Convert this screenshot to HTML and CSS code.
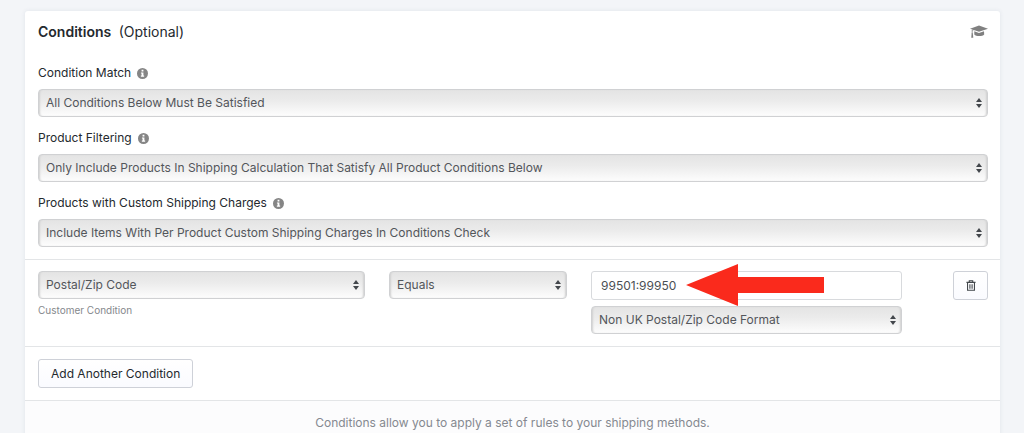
FILE: index.html
```html
<!DOCTYPE html>
<html lang="en">
<head>
<meta charset="utf-8">
<title>Conditions</title>
<link rel="stylesheet" href="styles.css">
</head>
<body>
<svg class="sprite" aria-hidden="true">
  <symbol id="info" viewBox="0 0 12 12">
    <circle cx="6" cy="6" r="6" fill="#858585"/>
    <path d="M5 2h2v1.700H5zM4.300 4.800H7v3.500h.8v1.200H4.200V8.300H5V6h-.7z" fill="#fff"/>
  </symbol>
</svg>
<main class="card">
  <section class="section general">
    <header class="card-header">
      <h2 class="title">Conditions <span class="optional">(Optional)</span></h2>
      <svg class="cap" viewBox="0 0 18 14" aria-hidden="true">
        <path d="M9 .6 18 3.800 9 6.800 0 3.800z" fill="#808080"/>
        <path d="M4.300 6.300 9 7.900l5-1.600.2 3.200c-1.600 2-8.300 2-9.900 0z" fill="#808080"/>
        <path d="M9 3.800 2.200 5v4.200" fill="none" stroke="#808080" stroke-width=".8"/>
        <path d="M1.700 8.300h1.100l.5 4.500H1.200z" fill="#808080"/>
      </svg>
    </header>
    <div class="field">
      <div class="label-row"><label for="match">Condition Match</label><svg class="info"><use href="#info"/></svg></div>
      <div class="select-box"><select id="match"><option>All Conditions Below Must Be Satisfied</option></select></div>
    </div>
    <div class="field">
      <div class="label-row"><label for="filtering">Product Filtering</label><svg class="info"><use href="#info"/></svg></div>
      <div class="select-box"><select id="filtering"><option>Only Include Products In Shipping Calculation That Satisfy All Product Conditions Below</option></select></div>
    </div>
    <div class="field">
      <div class="label-row"><label for="charges">Products with Custom Shipping Charges</label><svg class="info"><use href="#info"/></svg></div>
      <div class="select-box"><select id="charges"><option>Include Items With Per Product Custom Shipping Charges In Conditions Check</option></select></div>
    </div>
  </section>
  <section class="section condition">
    <div>
      <div class="select-box"><select id="type" aria-label="Condition type" aria-describedby="type-help"><option>Postal/Zip Code</option></select></div>
      <p class="help" id="type-help">Customer Condition</p>
    </div>
    <div class="select-box"><select aria-label="Operator"><option>Equals</option></select></div>
    <div class="values">
      <div class="input-box">
        <input class="text-input" type="text" value="99501:99950" aria-label="Postal/Zip Code value">
        <svg class="arrow" viewBox="0 0 138 42" aria-hidden="true"><path d="M0 21 52 0v13h86v16H52v13z" fill="#fa2a1c"/></svg>
      </div>
      <div class="select-box"><select aria-label="Code format"><option>Non UK Postal/Zip Code Format</option></select></div>
    </div>
    <button class="button delete" type="button" aria-label="Delete condition">
      <svg class="trash" viewBox="0 0 11 12" fill="none" stroke="#42474c" stroke-width="1.200" aria-hidden="true">
        <path d="M.5 2.600h10M3.600 2.400V.8h3.800v1.600M1.700 3v8.200h7.600V3M4.300 4.700v4.800M6.700 4.700v4.800"/>
      </svg>
    </button>
  </section>
  <section class="section">
    <button class="button" type="button">Add Another Condition</button>
  </section>
  <footer class="card-footer">Conditions allow you to apply a set of rules to your shipping methods.</footer>
</main>
</body>
</html>
```
FILE: styles.css
```css
* {
  box-sizing: border-box;
}

body {
  margin: 0;
  padding: 11px 24px 0 25px;
  background: #f3f5f8;
  color: #24292e;
  font: 12px/16px Inter, "Liberation Sans", sans-serif;
  overflow: hidden;
}

.sprite {
  position: absolute;
  width: 0;
  height: 0;
}

.card {
  background: #fff;
  border-radius: 3px;
  box-shadow: 0 0 4px rgba(60, 80, 110, 0.1);
}

.section {
  padding: 12px;
  padding-left: 13px;
  border-bottom: 1px solid #e3e5e7;
}

.card-header {
  display: flex;
  align-items: center;
  justify-content: space-between;
  height: 18px;
  margin-bottom: 24px;
}

.title {
  margin: 0;
  font-size: 14px;
  font-weight: 600;
  line-height: 18px;
}

.optional {
  margin-left: 4px;
  font-weight: 400;
}

.cap {
  width: 18px;
  height: 14px;
}

.field + .field {
  margin-top: 13px;
}

.label-row {
  display: flex;
  align-items: center;
  gap: 6px;
  margin-bottom: 8px;
}

.info {
  width: 11px;
  height: 11px;
}

.select-box {
  position: relative;
}

.select-box::before,
.select-box::after {
  content: "";
  position: absolute;
  right: 6px;
  border: 3px solid transparent;
  pointer-events: none;
}

.select-box::before {
  top: 9px;
  border-top: 0;
  border-bottom: 4px solid #42464b;
}

.select-box::after {
  top: 15px;
  border-bottom: 0;
  border-top: 4px solid #42464b;
}

select {
  appearance: none;
  display: block;
  width: 100%;
  height: 28px;
  padding: 0 20px 0 7px;
  border: 1px solid #d0d1d3;
  border-radius: 4px;
  background: linear-gradient(#e4e4e4, #ebebeb 40%, #fdfdfd);
  box-shadow: inset 2px 0 2px -1px #d0d0d0, inset -2px 0 2px -1px #d0d0d0;
  color: #53565b;
  font: inherit;
}

.condition {
  display: grid;
  grid-template-columns: 327fr 178fr 311fr 62fr;
  gap: 24px;
  align-items: start;
  padding-top: 11px;
}

.help {
  margin: 4px 0 0;
  color: #85888c;
  font-size: 10px;
  line-height: 14px;
}

.values {
  display: grid;
  gap: 6px;
}

.input-box {
  position: relative;
}

.text-input {
  display: block;
  width: 100%;
  height: 29px;
  padding: 0 9px;
  border: 1px solid #d8dadd;
  border-radius: 3px;
  background: #fff;
  color: #4b4f54;
  font: inherit;
}

.arrow {
  position: absolute;
  top: -7px;
  left: 95px;
  width: 138px;
  height: 42px;
}

.button {
  height: 29px;
  padding: 0 12px;
  border: 1px solid #ced1d8;
  border-radius: 3px;
  background: linear-gradient(#fff, #fafbff);
  color: #24292e;
  font: inherit;
}

.delete {
  display: flex;
  align-items: center;
  justify-content: center;
  justify-self: end;
  width: 35px;
  padding: 0;
}

.trash {
  width: 10px;
  height: 11px;
}

.card-footer {
  padding: 14px 12px;
  background: #fcfcfd;
  color: #858990;
  text-align: center;
}
```
